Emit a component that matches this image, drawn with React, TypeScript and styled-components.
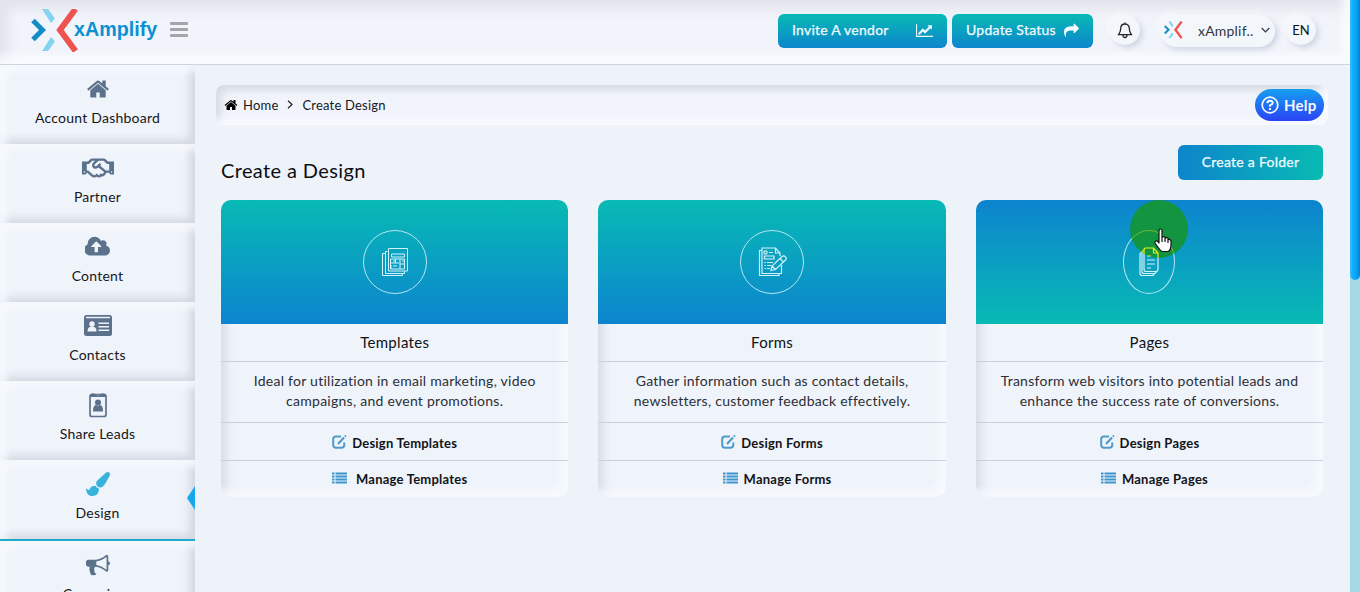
import React from "react";
import styled, { createGlobalStyle, css } from "styled-components";
import { FaRegHandshake } from "react-icons/fa";

const Global = createGlobalStyle`
  * { box-sizing: border-box; }
  body { margin: 0; overflow: hidden; background: #eef3fa; font-family: Lato, "Open Sans", sans-serif; color: #111; }
`;

const Screen = styled.div`
  display: flex;
  width: 1360px;
  height: 592px;
  overflow: hidden;
`;
const Page = styled.div`
  flex: 1;
  min-width: 0;
  display: flex;
  flex-direction: column;
`;
const ScrollTrack = styled.div`
  width: 10px;
  height: 592px;
  background: #a5d9e5;
`;
const ScrollThumb = styled.div`
  height: 280px;
  border-radius: 0 0 5px 5px;
  background: linear-gradient(90deg, #42bdf8 0, #0aaeff 3px, #08a6fb 6px, #087fd0 10px);
`;

/* Top bar */
const TopBar = styled.header`
  flex: none;
  height: 65px;
  display: flex;
  align-items: flex-start;
  padding: 0 34px 0 31px;
  background: #f1f4fa;
  border-bottom: 1px solid #cdd4e2;
  box-shadow: inset -8px -9px 9px rgba(250, 252, 255, 0.8), inset 8px 8px 12px rgba(196, 201, 213, 0.38);
`;
const BrandMark = styled.svg`
  display: block;
  flex: none;
`;
const Brand = styled.div`
  display: flex;
  padding-top: 9px;
`;
const BrandName = styled.span`
  margin: 8px 0 0 -5px;
  font: bold 19.7px/24px "Liberation Sans", Arial, sans-serif;
  color: #0b90d2;
`;
const MenuToggle = styled.button`
  display: flex;
  flex-direction: column;
  gap: 3px;
  margin: 22px 0 0 13px;
  padding: 0;
  border: 0;
  background: none;
  span {
    width: 18px;
    height: 3px;
    border-radius: 1px;
    background: #a2a5aa;
  }
`;
const Actions = styled.div`
  margin-left: auto;
  display: flex;
  align-items: flex-start;
  padding-top: 14px;
`;
const ActionButton = styled.button<{ $width: number }>`
  display: flex;
  align-items: center;
  justify-content: space-between;
  width: ${(p) => p.$width}px;
  height: 34px;
  margin-right: 5px;
  padding: 0 14px 2px;
  border: 0;
  border-radius: 6px;
  background: linear-gradient(#08bab3, #0d85ce);
  color: #f2fbff;
  font: 14px/20px Lato, sans-serif;
  letter-spacing: 0.25px;
  -webkit-text-stroke: 0.25px #f2fbff;
`;
const raised = css`
  background: #f3f6fb;
  box-shadow: 3px 3px 5px rgba(170, 180, 205, 0.45), -3px -3px 5px rgba(255, 255, 255, 0.45);
`;
const RoundButton = styled.button<{ $ml: number }>`
  display: grid;
  place-items: center;
  width: 30px;
  height: 30px;
  margin: 1px 0 0 ${(p) => p.$ml}px;
  padding: 0;
  border: 0;
  border-radius: 50%;
  font: 13px Lato, sans-serif;
  color: #111;
  ${raised}
`;
const Account = styled.button`
  display: flex;
  align-items: center;
  width: 115px;
  height: 32px;
  margin: 1px 0 0 20px;
  padding: 0 5px 2px 4px;
  border: 0;
  border-radius: 16px;
  font: 14px Lato, sans-serif;
  letter-spacing: 0.2px;
  color: #333840;
  ${raised}
  span { margin: 0 auto 0 15px; }
`;

/* Side navigation */
const Body = styled.div`
  flex: 1;
  min-height: 0;
  display: flex;
`;
const SideNav = styled.nav`
  flex: none;
  width: 195px;
  overflow: hidden;
`;
const NavItem = styled.a<{ $active?: boolean }>`
  position: relative;
  display: flex;
  flex-direction: column;
  align-items: center;
  height: ${(p) => (p.$active ? 81 : 79)}px;
  padding-top: 11px;
  border-bottom: ${(p) => (p.$active ? "2px solid #1eaacb" : "0")};
  background: #eff3fa;
  box-shadow: inset 7px 7px 7px rgba(248, 251, 255, 0.8), inset -5px -4px 8px rgba(190, 195, 205, 0.6);
  color: ${(p) => (p.$active ? "#36b3da" : "#5c728c")};
`;
const IconSlot = styled.div`
  height: 26px;
  display: grid;
  place-items: center;
`;
const PartnerIcon = styled(FaRegHandshake)`
  margin-top: -3px;
`;
const NavLabel = styled.span`
  margin-top: 6px;
  font-size: 14px;
  line-height: 20px;
  letter-spacing: 0.24px;
  color: #15171b;
`;
const ActivePointer = styled.i`
  position: absolute;
  right: 0;
  top: 26px;
  border: 12px solid transparent;
  border-left: 0;
  border-right: 8px solid #14a9ee;
`;

/* Main content */
const Main = styled.main`
  flex: 1;
  min-width: 0;
  padding: 20px 0 0 21px;
`;
const Crumbs = styled.div`
  display: flex;
  align-items: center;
  width: 1112px;
  height: 40px;
  padding: 0 4px 1px 8px;
  border-radius: 8px;
  font-size: 13px;
  letter-spacing: 0.2px;
  color: #16181d;
  background: #f1f5fb;
  box-shadow: inset -6px -6px 7px rgba(248, 251, 255, 0.9), inset 5px 5px 7px rgba(195, 199, 207, 0.55);
`;
const CrumbText = styled.span`
  margin-left: 5px;
`;
const CrumbArrow = styled.svg`
  margin: 0 4px 0 9px;
`;
const HelpButton = styled.button`
  display: flex;
  align-items: center;
  gap: 5px;
  width: 69px;
  height: 32px;
  margin-left: auto;
  padding: 0 0 0 6px;
  border: 0;
  border-radius: 16px;
  background: linear-gradient(#159ff0, #2a43f5);
  color: #f6faff;
  font: bold 15px Lato, sans-serif;
  letter-spacing: 0.2px;
`;
const TitleRow = styled.div`
  display: flex;
  justify-content: space-between;
  align-items: flex-start;
  width: 1107px;
  height: 75px;
  padding: 20px 0 0 5px;
`;
const Title = styled.h1`
  margin: 13px 0 0;
  font-size: 20px;
  line-height: 25px;
  font-weight: 400;
  letter-spacing: 0.38px;
  color: #0c0e12;
`;
const FolderButton = styled.button`
  width: 145px;
  height: 35px;
  padding: 0 0 2px;
  border: 0;
  border-radius: 6px;
  background: linear-gradient(90deg, #0d85cc, #08bab3);
  color: #f2fbff;
  font: 14px Lato, sans-serif;
  letter-spacing: 0.26px;
  -webkit-text-stroke: 0.25px #f2fbff;
`;
const Cards = styled.div`
  display: grid;
  grid-template-columns: repeat(3, 347.4px);
  gap: 30px;
  padding-left: 5px;
`;
const Card = styled.article`
  height: 297px;
  border-radius: 10px;
  overflow: hidden;
  text-align: center;
  background: #eff3fa;
  box-shadow: inset -8px -7px 7px rgba(247, 250, 255, 0.85), inset 8px 0 8px -3px rgba(198, 203, 212, 0.55);
`;
const CardTop = styled.div<{ $flipped?: boolean }>`
  position: relative;
  height: 124px;
  display: grid;
  place-items: center;
  background: linear-gradient(${(p) => (p.$flipped ? "#0c84cf, #08bab4" : "#08bab4, #0c84cf")});
`;
const Medallion = styled.div<{ $narrow?: boolean }>`
  display: grid;
  place-items: center;
  width: ${(p) => (p.$narrow ? 52 : 64)}px;
  height: 64px;
  border: 1px solid #b5e5f4;
  border-radius: 50%;
  color: #d2f3fa;
`;
const CardTitle = styled.h2`
  margin: 0;
  height: 38px;
  padding-top: 8px;
  font-size: 15px;
  line-height: 20px;
  font-weight: 400;
  letter-spacing: 0.3px;
  color: #101216;
  border-bottom: 1px solid #cbd0d8;
`;
const CardText = styled.p`
  margin: 0;
  height: 61px;
  padding-top: 9px;
  font-size: 14px;
  line-height: 20px;
  letter-spacing: 0.26px;
  color: #2b2f36;
  border-bottom: 1px solid #cbd0d8;
`;
const CardLink = styled.a<{ $last?: boolean; $gap: number }>`
  display: flex;
  justify-content: center;
  align-items: center;
  gap: ${(p) => p.$gap}px;
  height: ${(p) => (p.$last ? 35 : 38)}px;
  padding-top: ${(p) => (p.$last ? 0 : 2)}px;
  padding-left: ${(p) => (p.$last ? 10 : 0)}px;
  border-bottom: ${(p) => (p.$last ? 0 : 1)}px solid #cbd0d8;
  font-size: 13px;
  font-weight: 700;
  letter-spacing: 0.23px;
  color: #121418;
  svg { margin-top: -2px; }
`;
const PointerHalo = styled.div`
  position: absolute;
  left: 154px;
  top: 0;
  width: 58px;
  height: 58px;
  border-radius: 50%;
  background: #129440;
  overflow: hidden;
`;
const HaloArtwork = styled.div`
  position: absolute;
  left: -6.300px;
  top: 30px;
  > div { border-color: #72b928; color: #e6f21b; }
`;
const Hand = styled.svg`
  position: absolute;
  left: 178px;
  top: 28px;
`;

const NavGlyph = ({ d, w, vb }: { d: string; w: number; vb: string }) => (
  <svg width={w} height={24} viewBox={vb} fill="currentColor"><path d={d} /></svg>
);
const HOME = "M1472 992v480q0 26-19 45t-45 19h-384v-384h-256v384h-384q-26 0-45-19t-19-45v-480q0-1 .5-3t.5-3l575-474 575 474q1 2 1 6zm223-69l-62 74q-8 9-21 11h-3q-13 0-21-7l-692-577-692 577q-12 8-24 7-13-2-21-11l-62-74q-8-10-7-23.5t11-21.5l719-599q32-26 76-26t76 26l244 204v-195q0-14 9-23t23-9h192q14 0 23 9t9 23v408l219 182q10 8 11 21.5t-7 23.5z";
const CLOUD = "M1216 864q0-14-9-23l-352-352q-9-9-23-9t-23 9l-351 351q-10 12-10 24 0 14 9 23t23 9h224v352q0 13 9.5 22.5t22.5 9.5h192q13 0 22.5-9.5t9.5-22.5v-352h224q13 0 22.5-9.5t9.5-22.5zm640 288q0 159-112.5 271.5t-271.5 112.5h-1088q-185 0-316.5-131.5t-131.5-316.5q0-130 70-240t188-165q-2-30-2-43 0-212 150-362t362-150q156 0 285.5 87t188.5 231q71-62 166-62 106 0 181 75t75 181q0 76-41 138 130 31 213.5 135.5t83.5 238.5z";
const BRUSH = "M1615 0q70 0 122.5 46.5t52.5 116.5q0 63-45 151-332 629-465 752-97 91-218 91-126 0-216.5-92.5t-90.5-219.5q0-128 92-212l638-579q59-54 130-54zm-909 1034q39 76 106.5 130t150.5 76l1 71q4 213-129.5 347t-348.5 134q-123 0-218-46.5t-152.5-127.5-86.5-183-29-220q7 5 41 30t62 44.5 59 36.5 46 17q41 0 55-37 25-66 57.5-112.5t69.5-76 88-47.5 103-25.5 125-10.5z";
const HORN = "M1664 640q53 0 90.5 37.5t37.5 90.5-37.5 90.5-90.5 37.5v384q0 52-38 90t-90 38q-417-347-812-380-58 19-91 66t-31 100.5 40 92.5q-20 33-23 65.5t6 58 33.5 55 48 50 61.5 50.5q-29 58-111.5 83t-168.5 11.5-132-55.5q-7-23-29.5-87.5t-32-94.5-23-89-15-101 3.5-98.5 22-110.5h-122q-66 0-113-47t-47-113v-192q0-66 47-113t113-47h480q435 0 896-384 52 0 90 38t38 90v384zm-128 604v-954q-394 302-768 343v270q377 42 768 341z";
const CHART = "M2048 1536v128h-2048v-1536h128v1408h1920zm-128-1248v435q0 21-19.5 29.5t-35.5-7.5l-121-121-633 633q-10 10-23 10t-23-10l-233-233-416 416-192-192 585-585q10-10 23-10t23 10l233 233 464-464-121-121q-16-16-7.5-35.5t29.5-19.5h435q14 0 23 9t9 23z";
const SHARE = "M1792 640q0 26-19 45l-512 512q-19 19-45 19t-45-19-19-45v-256h-224q-98 0-175.5 6t-154 21.5-133 42.5-105.5 69.5-80 101-48.5 138.5-17.5 181q0 55 5 123 0 6 2.5 23.5t2.5 26.5q0 15-8.5 25t-23.5 10q-16 0-28-17-7-9-13-22t-13.5-30-10.5-24q-127-285-127-451 0-199 53-333 162-403 875-403h224v-256q0-26 19-45t45-19 45 19l512 512q19 19 19 45z";

const Logo = ({ w, h }: { w: number; h: number }) => (
  <BrandMark width={w} height={h} viewBox="0 0 48 43" fill="none">
    <path d="M11 0H17L24 9.500 20 14ZM11 42H17L24 32.500 20 28Z" fill="#85d3ef" />
    <path d="M2 11.500L11.500 21 2 30.500" stroke="#168bca" strokeWidth="5" />
    <path d="M44.500 0L29 21 44.500 42" stroke="#ef5350" strokeWidth="6" />
  </BrandMark>
);
const ContactCard = () => (
  <svg width="28" height="22" viewBox="0 0 28 22">
    <rect width="28" height="21" y="0" rx="2.500" fill="currentColor" />
    <path d="M2 2.500H26" stroke="#eff3fa" strokeWidth="1.500" />
    <circle cx="8" cy="9" r="2.700" fill="#eff3fa" />
    <path d="M3.500 16.500Q3.500 11.500 8 11.500T12.500 16.500ZM14.500 7.500H25V9H14.500ZM14.500 11H25V12.500H14.500ZM14.500 14.500H25V16H14.500Z" fill="#eff3fa" />
  </svg>
);
const Badge = () => (
  <svg width="18" height="25" viewBox="0 0 18 25">
    <rect x="1" y="1.500" width="16" height="22" rx="2" fill="none" stroke="currentColor" strokeWidth="1.700" />
    <path d="M1 4V2.500Q1 .5 3 .5H5.500Q6.500 2.500 9 2.500T12.500 .5H15Q17 .5 17 2.500V4Z" fill="currentColor" />
    <circle cx="9" cy="9.500" r="3" fill="currentColor" />
    <path d="M4 18.500Q3.800 12.500 7 12 9 13.500 11 12 14.200 12.500 14 18.500Z" fill="currentColor" />
  </svg>
);
const EditIcon = () => (
  <svg width="15" height="14" viewBox="0 0 15 14" fill="none" stroke="#4f9ccc">
    <path d="M9 1.500H4Q1.200 1.500 1.200 4V10Q1.200 12.700 4 12.700H9.500Q12.300 12.700 12.300 10V7.500" strokeWidth="2" />
    <path d="M6 9L12 2.500" strokeWidth="2.200" /><path d="M12.800 1.600L14 .5" strokeWidth="2" />
  </svg>
);
const ListIcon = () => (
  <svg width="15" height="12" viewBox="0 0 15 12" stroke="#3c95cd" strokeWidth="2">
    <path d="M0 1.500H2.500M0 4.500H2.500M0 7.500H2.500M0 10.500H2.500M3.500 1.500H15M3.500 4.500H15M3.500 7.500H15M3.500 10.500H15" />
  </svg>
);
const TemplatesArt = () => (
  <svg width="28" height="30" viewBox="0 0 28 30" fill="none" stroke="#d2f3fa">
    <path d="M4.500 6.500H1.500V28.500H21.500V26.500M6.500 4.500H4.500V26.500H23.500V24M7.500 1.500H26.500V24H7.500Z" />
    <path d="M10.500 7H23.500V10H10.500ZM9.500 12H23.500V22H9.500ZM9.500 16H18M14.500 12V16M19 12V22M12 14H14M12 19H16M19 17H23.500M10 22V18M21 14H23" />
  </svg>
);
const FormsArt = () => (
  <svg width="30" height="30" viewBox="0 0 30 30" fill="none" stroke="#d2f3fa" strokeWidth="1.200">
    <path d="M4.500 3.500H2.500V28.500H22V26.500M24.500 18V26.500H5V1H18.500L23 6V9M18.500 1V6H23" />
    <circle cx="8.500" cy="5.500" r="1.600" />
    <path d="M12 5.500H16M7.500 9H17V12H7.500ZM7.500 15.500H9M10 15.500H16M7.500 18.500H9M10 18.500H14M7.500 21.500H9M10 21.500H13M14 23.500L15 19 25 9.500Q27 8 28.500 10 30 11.500 28.500 13L18.500 22.500ZM15 19L18.500 22.500M23 11.500L26.500 15" />
  </svg>
);
const PagesArt = () => (
  <svg width="20" height="30" viewBox="0 0 20 30" fill="none" stroke="currentColor" strokeWidth="1.200">
    <path d="M3 5.500Q1 5.500 1 7V26Q1 28.500 3 28.500H13Q15 28.500 15 26.500M5 3.500Q3 3.500 3 5V24.500Q3 26.500 5 26.500H15Q17 26.500 17 24.500M14.500 1H7Q5 1 5 3V22Q5 24.500 7 24.500H17Q19 24.500 19 22V6ZM14.500 1V6H19M8 9H12M8 13H16M8 17H16M8 21H12" />
  </svg>
);

const nav = [
  { label: "Account Dashboard", icon: <NavGlyph d={HOME} w={24} vb="0 0 1792 1792" /> },
  { label: "Partner", icon: <PartnerIcon size={32} /> },
  { label: "Content", icon: <NavGlyph d={CLOUD} w={26} vb="0 0 1920 1792" /> },
  { label: "Contacts", icon: <ContactCard /> },
  { label: "Share Leads", icon: <Badge /> },
  { label: "Design", icon: <NavGlyph d={BRUSH} w={24} vb="0 0 1792 1792" />, active: true },
  { label: "Campaigns", icon: <NavGlyph d={HORN} w={24} vb="0 0 1792 1792" /> },
];
const cards = [
  { name: "Templates", lines: ["Ideal for utilization in email marketing, video", "campaigns, and event promotions."], art: <TemplatesArt />, gap: 9 },
  { name: "Forms", lines: ["Gather information such as contact details,", "newsletters, customer feedback effectively."], art: <FormsArt />, gap: 6 },
  { name: "Pages", lines: ["Transform web visitors into potential leads and", "enhance the success rate of conversions."], art: <PagesArt />, gap: 6, hovered: true },
];

export default function App() {
  return (
    <Screen>
      <Global />
      <Page>
        <TopBar>
          <Brand><Logo w={48} h={43} /><BrandName>xAmplify</BrandName></Brand>
          <MenuToggle aria-label="Menu"><span /><span /><span /></MenuToggle>
          <Actions>
            <ActionButton $width={169}>Invite A vendor
              <svg width="17" height="15" viewBox="0 0 2048 1792" fill="currentColor"><path d={CHART} /></svg>
            </ActionButton>
            <ActionButton $width={141}>Update Status
              <svg width="15" height="15" viewBox="0 0 1792 1792" fill="currentColor"><path d={SHARE} /></svg>
            </ActionButton>
            <RoundButton $ml={12} aria-label="Notifications">
              <svg width="16" height="17" viewBox="0 0 16 17" fill="none" stroke="#22262c" strokeWidth="1.300">
                <path d="M8 2C5 2 3.700 4.200 3.700 6.500 3.700 10 2.500 11 1.500 12.700H14.500C13.500 11 12.300 10 12.300 6.500 12.300 4.200 11 2 8 2ZM8 2V.5M6 13Q6 15.500 8 15.500T10 13" />
              </svg>
            </RoundButton>
            <Account>
              <Logo w={19} h={18} /><span>xAmplif..</span>
              <svg width="9" height="6" viewBox="0 0 9 6" fill="none" stroke="#333840" strokeWidth="1.200"><path d="M.7 1L4.500 4.800 8.300 1" /></svg>
            </Account>
            <RoundButton $ml={11}>EN</RoundButton>
          </Actions>
        </TopBar>
        <Body>
          <SideNav>
            {nav.map((n) => (
              <NavItem key={n.label} $active={n.active}>
                <IconSlot>{n.icon}</IconSlot>
                <NavLabel>{n.label}</NavLabel>
                {n.active && <ActivePointer />}
              </NavItem>
            ))}
          </SideNav>
          <Main>
            <Crumbs>
              <svg width="14" height="14" viewBox="0 0 1792 1792"><path d={HOME} /></svg>
              <CrumbText>Home</CrumbText>
              <CrumbArrow width="6" height="9" viewBox="0 0 6 9" fill="none" stroke="#222" strokeWidth="1.200"><path d="M1 .7L5 4.500 1 8.300" /></CrumbArrow>
              <CrumbText>Create Design</CrumbText>
              <HelpButton>
                <svg width="18" height="18" viewBox="0 0 18 18" fill="none" stroke="currentColor" strokeWidth="2">
                  <circle cx="9" cy="9" r="7.800" strokeWidth="1.700" />
                  <path d="M6.300 7.200Q6.500 4.700 9 4.700T11.700 7Q11.700 8.300 9 9.400V10.800M9 12V14" />
                </svg>
                Help
              </HelpButton>
            </Crumbs>
            <TitleRow>
              <Title>Create a Design</Title>
              <FolderButton>Create a Folder</FolderButton>
            </TitleRow>
            <Cards>
              {cards.map((c) => (
                <Card key={c.name}>
                  <CardTop $flipped={c.hovered}>
                    <Medallion $narrow={c.hovered}>{c.art}</Medallion>
                    {c.hovered && (
                      <>
                        <PointerHalo><HaloArtwork><Medallion $narrow>{c.art}</Medallion></HaloArtwork></PointerHalo>
                        <Hand width="18" height="25" viewBox="0 0 18 25" fill="#fff" stroke="#111" strokeWidth="1.200" strokeLinejoin="round">
                          <path d="M5 15V3Q5 1 6.500 1T8 3V10Q8.500 8 11 9V11Q11.500 9 14 10V12Q15 10.500 17 12.500V18Q16.500 22 14.500 23.500H8Q6 22.500 1 15 .5 13.500 2 13T5 15ZM8 10V14M11 10V14M14 11V15" />
                        </Hand>
                      </>
                    )}
                  </CardTop>
                  <CardTitle>{c.name}</CardTitle>
                  <CardText>{c.lines[0]}<br />{c.lines[1]}</CardText>
                  <CardLink $gap={5}><EditIcon />Design {c.name}</CardLink>
                  <CardLink $gap={c.gap} $last><ListIcon />Manage {c.name}</CardLink>
                </Card>
              ))}
            </Cards>
          </Main>
        </Body>
      </Page>
      <ScrollTrack><ScrollThumb /></ScrollTrack>
    </Screen>
  );
}
